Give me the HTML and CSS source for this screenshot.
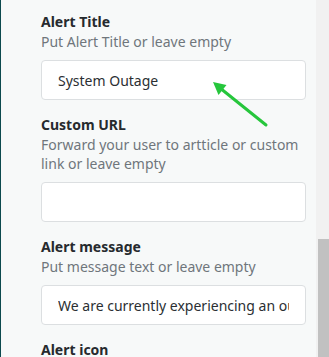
FILE: index.html
```html
<!DOCTYPE html>
<html>
    <head>
        <title>Alert settings</title>
        <link rel="stylesheet" href="styles.css">
    </head>
    <body>
        <div class="borde"></div>
        <div class="painel">
            <div class="campo">
                <label class="rotulo" for="titulo">Alert Title</label>
                <p class="ajuda">Put Alert Title or leave empty</p>
                <input class="entrada" id="titulo" type="text" value="System Outage">
            </div>
            <div class="campo">
                <label class="rotulo" for="url">Custom URL</label>
                <p class="ajuda">Forward your user to artticle or custom link or leave empty</p>
                <input class="entrada" id="url" type="text" value="">
            </div>
            <div class="campo">
                <label class="rotulo" for="mensagem">Alert message</label>
                <p class="ajuda">Put message text or leave empty</p>
                <input class="entrada" id="mensagem" type="text" value="We are currently experiencing an outage">
            </div>
            <div class="campo">
                <label class="rotulo">Alert icon</label>
            </div>
            <!-- seta verde apontando para o campo -->
            <svg class="seta" width="329" height="357" viewBox="0 0 329 357">
                <line x1="266" y1="125" x2="220" y2="88" stroke="#26c63c" stroke-width="3" stroke-linecap="round"/>
                <polygon points="213,82 226.5,85 218.5,95" fill="#26c63c"/>
            </svg>
        </div>
        <div class="rolagem">
            <div class="barra"></div>
        </div>
    </body>
</html>
```

FILE: styles.css
```css
body{
    margin: 0;
    height: 357px;
    display: flex;
    overflow: hidden;
    font-family: "Noto Sans", sans-serif;
    font-size: 14px;
}
.borde{
    width: 1px;
    background-color: #0c4a4e;
}
.painel{
    flex: 1;
    min-width: 0;
    background-color: #f7f9f9;
    padding: 12px 10px 0 40px;
}
.campo{
    margin-bottom: 15px;
}
.rotulo{
    display: block;
    font-weight: bold;
    color: #262a2e;
    line-height: 20px;
}
.ajuda{
    margin: 0 0 9px;
    color: #6f767c;
    line-height: 19px;
}
.entrada{
    display: block;
    box-sizing: border-box;
    width: 100%;
    height: 40px;
    margin: 0;
    padding: 0 16px;
    background-color: #fff;
    border: 1px solid #dcdfe1;
    border-radius: 4px;
    color: #2b2f33;
    font-family: inherit;
    font-size: 14px;
    outline: none;
}
.seta{
    position: absolute;
    left: 0;
    top: 0;
}
.rolagem{
    width: 13px;
    background-color: #f1f1f1;
    display: flex;
    flex-direction: column;
    justify-content: flex-end;
    align-items: flex-end;
}
.barra{
    width: 11px;
    height: 118px;
    background-color: #c1c1c1;
}
```
